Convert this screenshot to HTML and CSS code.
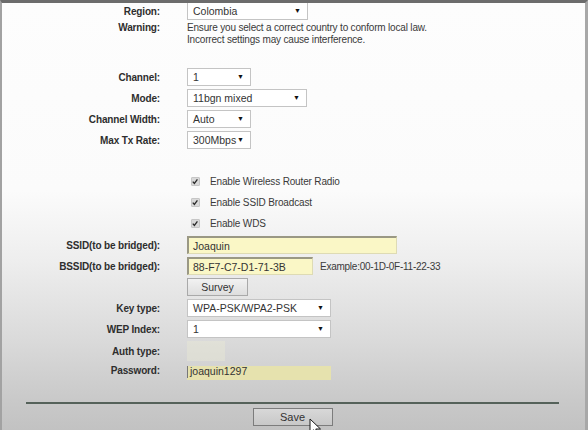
FILE: index.html
```html
<!DOCTYPE html>
<html>
<head>
<meta charset="utf-8">
<link rel="stylesheet" href="styles.css">
</head>
<body>
<div class="page">
  <div class="row r-region">
    <div class="lbl">Region:</div>
    <div class="val"><div class="sel w-region">Colombia<span class="arr">▼</span></div></div>
  </div>
  <div class="row r-warn">
    <div class="lbl">Warning:</div>
    <div class="val note">Ensure you select a correct country to conform local law.<br>Incorrect settings may cause interference.</div>
  </div>

  <div class="group g-radio">
    <div class="row">
      <div class="lbl">Channel:</div>
      <div class="val"><div class="sel w-short">1<span class="arr">▼</span></div></div>
    </div>
    <div class="row">
      <div class="lbl">Mode:</div>
      <div class="val"><div class="sel w-mode">11bgn mixed<span class="arr">▼</span></div></div>
    </div>
    <div class="row">
      <div class="lbl">Channel Width:</div>
      <div class="val"><div class="sel w-short">Auto<span class="arr">▼</span></div></div>
    </div>
    <div class="row">
      <div class="lbl">Max Tx Rate:</div>
      <div class="val"><div class="sel w-short">300Mbps<span class="arr">▼</span></div></div>
    </div>
  </div>

  <div class="group g-checks">
    <div class="row">
      <div class="lbl"></div>
      <div class="val chk"><span class="box"><svg viewBox="0 0 9 9" width="9" height="9"><path d="M2 4.6 L3.8 6.6 L7.2 2.2" fill="none" stroke="#2a2a2a" stroke-width="1.5"/></svg></span>Enable Wireless Router Radio</div>
    </div>
    <div class="row">
      <div class="lbl"></div>
      <div class="val chk"><span class="box"><svg viewBox="0 0 9 9" width="9" height="9"><path d="M2 4.6 L3.8 6.6 L7.2 2.2" fill="none" stroke="#2a2a2a" stroke-width="1.5"/></svg></span>Enable SSID Broadcast</div>
    </div>
    <div class="row">
      <div class="lbl"></div>
      <div class="val chk"><span class="box"><svg viewBox="0 0 9 9" width="9" height="9"><path d="M2 4.6 L3.8 6.6 L7.2 2.2" fill="none" stroke="#2a2a2a" stroke-width="1.5"/></svg></span>Enable WDS</div>
    </div>
  </div>

  <div class="group g-wds">
    <div class="row">
      <div class="lbl">SSID(to be bridged):</div>
      <div class="val"><div class="txt w-ssid">Joaquin</div></div>
    </div>
    <div class="row">
      <div class="lbl">BSSID(to be bridged):</div>
      <div class="val"><div class="txt w-bssid">88-F7-C7-D1-71-3B</div><span class="example">Example:00-1D-0F-11-22-33</span></div>
    </div>
    <div class="row">
      <div class="lbl"></div>
      <div class="val"><div class="btn btn-survey">Survey</div></div>
    </div>
    <div class="row">
      <div class="lbl">Key type:</div>
      <div class="val"><div class="sel w-key">WPA-PSK/WPA2-PSK<span class="arr">▼</span></div></div>
    </div>
    <div class="row">
      <div class="lbl">WEP Index:</div>
      <div class="val"><div class="sel w-key">1<span class="arr">▼</span></div></div>
    </div>
    <div class="row">
      <div class="lbl">Auth type:</div>
      <div class="val"><div class="ghost"></div></div>
    </div>
    <div class="row r-pass">
      <div class="lbl">Password:</div>
      <div class="val"><div class="pass"><span class="caret"></span>joaquin1297</div></div>
    </div>
  </div>

  <div class="rule"></div>
  <div class="actions"><div class="btn btn-save">Save</div></div>
</div>

<div class="frame"></div>
<svg class="pointer" width="14" height="20" viewBox="0 0 14 20"><path d="M1 1 L1 15 L4.5 11.8 L7 17.5 L9.2 16.5 L6.8 11 L11.5 11 Z" fill="#ffffff" stroke="#1a1a1a" stroke-width="1"/></svg>
</body>
</html>
```

FILE: styles.css
```css
html, body {
  margin: 0;
  padding: 0;
}
body {
  width: 588px;
  height: 430px;
  overflow: hidden;
  font-family: "Liberation Sans", Arial, sans-serif;
  font-size: 10px;
  color: #333;
  background: linear-gradient(to bottom, #fdfdfd 0px, #fbfbfb 190px, #eeeeee 260px, #dadada 340px, #c9c9c9 400px, #c2c2c2 430px);
  position: relative;
}
.page {
  padding-top: 2px;
}
.row {
  display: grid;
  grid-template-columns: 160px 1fr;
  column-gap: 27px;
  height: 18px;
  align-items: center;
  margin-bottom: 3px;
}
.lbl {
  text-align: right;
  font-weight: bold;
  color: #2e2e2e;
  white-space: nowrap;
  letter-spacing: -0.15px;
}
.val {
  display: flex;
  align-items: center;
  white-space: nowrap;
}
.r-region {
  margin-bottom: 2px;
}
.r-warn {
  height: 24px;
  align-items: start;
  line-height: 12px;
}
.note {
  display: block;
  color: #3a3a3a;
  letter-spacing: -0.18px;
}
.g-radio {
  margin-top: 22px;
}
.g-checks {
  margin-top: 23px;
}
.g-wds {
  margin-top: 4px;
}
.sel {
  box-sizing: border-box;
  height: 18px;
  border: 1px solid #c4c4c4;
  background: #fff;
  padding-left: 5px;
  display: flex;
  align-items: center;
  position: relative;
  color: #333;
  font-size: 10.5px;
}
.arr {
  position: absolute;
  right: 6px;
  top: 4px;
  font-size: 7px;
  color: #111;
}
.w-region { width: 121px; }
.w-short { width: 64px; }
.w-mode { width: 120px; }
.w-key { width: 144px; }
.chk {
  padding-left: 4px;
  color: #3a3a3a;
  letter-spacing: -0.15px;
}
.box {
  box-sizing: border-box;
  width: 9px;
  height: 9px;
  background: #d9d9d9;
  border: 1px solid #c6c6c6;
  border-radius: 1px;
  display: inline-flex;
  margin-right: 10px;
  overflow: hidden;
}
.box svg {
  margin: -1px 0 0 -1px;
}
.txt {
  box-sizing: border-box;
  height: 18px;
  background: #faf7c6;
  border: 1px solid #dedbb4;
  border-top: 2px solid #9a9884;
  border-left: 2px solid #9a9884;
  padding-left: 4px;
  display: flex;
  align-items: center;
  font-size: 10.5px;
  color: #333;
}
.w-ssid { width: 210px; }
.w-bssid { width: 126px; }
.example {
  margin-left: 7px;
  color: #3a3a3a;
  letter-spacing: -0.25px;
}
.btn {
  box-sizing: border-box;
  height: 18px;
  display: flex;
  align-items: center;
  justify-content: center;
  font-size: 10.5px;
  color: #333;
}
.btn-survey {
  width: 61px;
  background: linear-gradient(#f2f2f2, #dedede);
  border: 1px solid #a9a9a9;
}
.ghost {
  width: 38px;
  height: 20px;
  background: #e9e8d4;
  opacity: 0.45;
}
.r-pass {
  margin-top: -1px;
}
.pass {
  box-sizing: border-box;
  width: 144px;
  height: 14px;
  margin-top: 5px;
  background: #e6e2ae;
  display: flex;
  align-items: flex-start;
  line-height: 10px;
  font-size: 10.5px;
  color: #333;
}
.caret {
  width: 1px;
  height: 12px;
  background: #777;
  margin-right: 2px;
}
.rule {
  margin: 23px 0 0 26px;
  width: 533px;
  height: 2px;
  background: #55625a;
}
.actions {
  display: flex;
  justify-content: center;
  width: 533px;
  margin-left: 26px;
  margin-top: 4px;
}
.btn-save {
  width: 80px;
  background: linear-gradient(#d8d8d8, #c8c8c8);
  border: 1px solid #7c7c7c;
  font-size: 11px;
}
.frame {
  position: absolute;
  left: 0;
  top: 0;
  width: 588px;
  height: 430px;
  box-sizing: border-box;
  border-top: 3px solid #6c6c6c;
  border-left: 2px solid #a2a2a2;
  border-right: 3px solid #a8a8a8;
  pointer-events: none;
}
.pointer {
  position: absolute;
  left: 309px;
  top: 418px;
}
```
